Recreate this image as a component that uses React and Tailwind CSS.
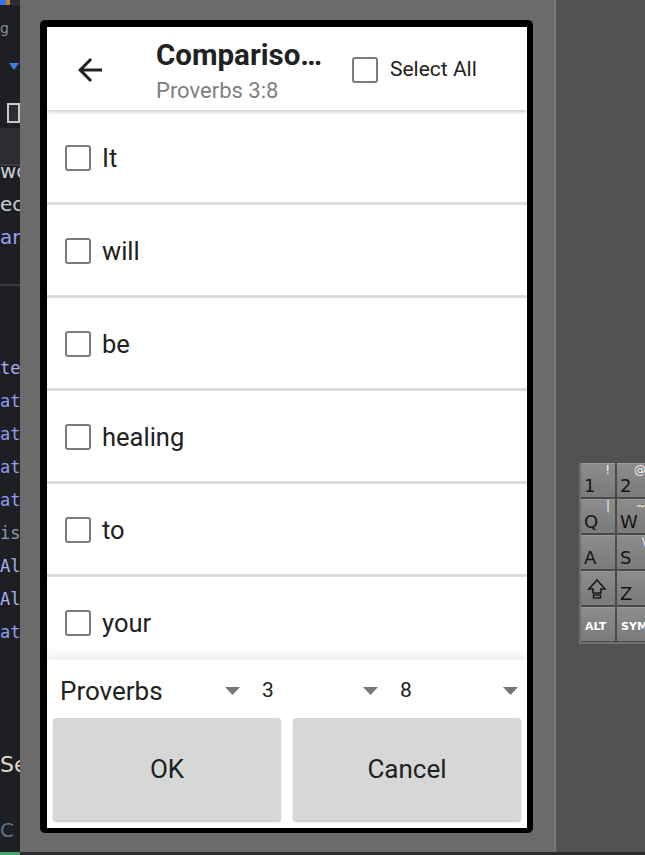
import React from 'react';

const words = ['It', 'will', 'be', 'healing', 'to', 'your', 'navel'];

const codeLines = [
  { t: 'te', c: 'text-[#b4a8f0]' },
  { t: 'at', c: 'text-[#8f9cf0]' },
  { t: 'at', c: 'text-[#8f9cf0]' },
  { t: 'at', c: 'text-[#8f9cf0]' },
  { t: 'at', c: 'text-[#8f9cf0]' },
  { t: 'is', c: 'text-[#8b9bb0]' },
  { t: 'Al', c: 'text-[#a9b0f5]' },
  { t: 'Al', c: 'text-[#a9b0f5]' },
  { t: 'at', c: 'text-[#8f9cf0]' },
];

const keys = [
  ['1', '!', '2', '@'],
  ['Q', '|', 'W', '~'],
  ['A', '', 'S', '\\'],
  ['shift', '', 'Z', ''],
  ['ALT', '', 'SYM', ''],
];

function Box({ className = '' }) {
  return <div className={`w-[26px] h-[26px] shrink-0 rounded-[3px] border-[2.5px] border-[#7b7b7b] ${className}`} />;
}

function Caret() {
  return (
    <svg width="15" height="8" viewBox="0 0 15 8" className="shrink-0">
      <path d="M0 0h15L7.5 8z" fill="#777777" />
    </svg>
  );
}

function Key({ label, sup }) {
  const dark = label === 'ALT' || label === 'SYM';
  return (
    <div className="relative h-[34px] w-[34px] shrink-0 bg-gradient-to-b from-[#8c8c8c] to-[#7a7a7a] border-t border-[#9a9a9a] overflow-hidden">
      {label === 'shift' ? (
        <svg width="20" height="22" viewBox="0 0 20 22" className="absolute left-[6px] top-[6px]">
          <path d="M10 2 L18 11 H14 V15 H6 V11 H2 Z" fill="none" stroke="#1a1a1a" strokeWidth="1.6" />
          <rect x="6.5" y="17" width="7" height="3" fill="none" stroke="#1a1a1a" strokeWidth="1.4" />
        </svg>
      ) : dark ? (
        <span className="absolute left-[4px] top-[11px] text-[11px] font-bold text-white" style={{ fontFamily: '"DejaVu Sans", sans-serif' }}>{label}</span>
      ) : (
        <span className="absolute left-[3px] bottom-[2px] text-[18px] leading-none text-[#151515]" style={{ fontFamily: '"DejaVu Sans", sans-serif' }}>{label}</span>
      )}
      {sup && (
        <span className="absolute right-[5px] top-[0px] text-[12px] leading-none text-[#f2f2f2]" style={{ fontFamily: '"DejaVu Sans", sans-serif' }}>{sup}</span>
      )}
    </div>
  );
}

export default function App() {
  return (
    <div className="w-[645px] h-[855px] overflow-hidden flex flex-col bg-[#1e1f22]">
      <div className="flex h-[852px]">
        {/* IDE strip */}
        <div className="w-[20px] shrink-0 flex flex-col overflow-hidden bg-[#1e1f22]" style={{ fontFamily: '"DejaVu Sans Mono", monospace' }}>
          <div className="h-[5px] shrink-0 flex">
            <div className="w-[6px] bg-[#3574f0]" />
            <div className="w-[4px] bg-[#c77d3a]" />
            <div className="flex-1 bg-[#2b2d30]" />
          </div>
          <div className="h-[46px] shrink-0 pt-[16px] text-[14px] leading-none text-[#8a8d94]" style={{ fontFamily: '"DejaVu Sans", sans-serif' }}>g</div>
          <div className="h-[48px] shrink-0 flex items-start justify-end pr-[1px] pt-[12px]">
            <svg width="10" height="7" viewBox="0 0 10 7"><path d="M0 0h10L5 7z" fill="#3d7dd6" /></svg>
          </div>
          <div className="h-[29px] shrink-0 flex justify-end pt-[4px]">
            <div className="w-[13px] h-[20px] border-2 border-[#c8c8c8] bg-[#2b2d30]" />
          </div>
          <div className="h-[36px] shrink-0 bg-[#2b2d30]" />
          <div className="h-[2px] shrink-0 bg-[#393b40]" />
          <div className="flex flex-col shrink-0" style={{ fontFamily: '"DejaVu Sans", sans-serif' }}>
            <div className="h-[22px] overflow-hidden">
              <div className="-mt-[11px] h-[33px] text-[20px] leading-[33px] text-[#c9ccd2]">wo</div>
            </div>
            <div className="h-[33px] text-[20px] leading-[33px] text-[#c9ccd2]">ec</div>
            <div className="h-[33px] text-[20px] leading-[33px] text-[#9aa2f2]">ar</div>
          </div>
          <div className="h-[30px] shrink-0" />
          <div className="h-[2px] shrink-0 bg-[#393b40]" />
          <div className="h-[66px] shrink-0" />
          <div className="flex flex-col shrink-0">
            {codeLines.map((l, i) => (
              <div key={i} className={`h-[33px] text-[17px] leading-[33px] ${l.c}`}>{l.t}</div>
            ))}
          </div>
          <div className="h-[101px] shrink-0" />
          <div className="h-[30px] shrink-0 text-[22px] leading-[30px] text-[#e6d9c6]" style={{ fontFamily: '"DejaVu Sans", sans-serif' }}>Se</div>
          <div className="h-[40px] shrink-0" />
          <div className="h-[20px] shrink-0 text-[20px] leading-[20px] text-[#5d7387]" style={{ fontFamily: '"DejaVu Sans", sans-serif' }}>C</div>
        </div>

        {/* Emulator frame */}
        <div className="w-[534px] shrink-0 bg-[#6b6b6b] pt-[20px] pl-[20px]">
          <div className="w-[493px] h-[813px] bg-black rounded-[5px] pl-[7px] pt-[7px] pr-[6px] pb-[5px]">
            <div className="w-[480px] h-[801px] bg-white flex flex-col overflow-hidden" style={{ fontFamily: 'Roboto, "Noto Sans", sans-serif' }}>
              {/* Header */}
              <div className="relative z-10 h-[83px] shrink-0 flex items-center bg-white shadow-[0_2px_4px_rgba(0,0,0,0.2)]">
                <div className="w-[109px] shrink-0 flex justify-center pl-[2px] pt-[2px]">
                  <svg width="36" height="36" viewBox="0 0 24 24" className="mr-[26px]">
                    <path d="M20 11H7.83l5.59-5.59L12 4l-8 8 8 8 1.41-1.41L7.83 13H20v-2z" fill="#222222" />
                  </svg>
                </div>
                <div className="w-[196px] shrink-0 self-start pt-[11px] flex flex-col">
                  <div className="h-[34px] text-[29.5px] leading-[34px] font-bold text-[#212121] whitespace-nowrap">Compariso…</div>
                  <div className="h-[28px] mt-[5px] text-[22px] leading-[28px] text-[#808080]">Proverbs 3:8</div>
                </div>
                <div className="flex items-center pt-[2px]">
                  <Box />
                  <span className="ml-[12px] text-[21px] text-[#212121]">Select All</span>
                </div>
              </div>

              {/* List */}
              <div className="flex-1 overflow-hidden flex flex-col pt-[2px]">
                {words.map((w) => (
                  <div key={w} className="h-[93px] shrink-0 flex items-center pl-[18px] pt-[2px] border-b-[3px] border-[#dcdcdc]">
                    <Box />
                    <span className="ml-[11px] text-[25.5px] text-[#212121]">{w}</span>
                  </div>
                ))}
              </div>

              {/* Footer */}
              <div className="relative z-10 h-[168px] shrink-0 bg-white shadow-[0_-5px_8px_rgba(0,0,0,0.07)] px-[6px] flex flex-col">
                <div className="h-[58px] flex items-center pt-[4px]">
                  <div className="w-[194px] flex items-center justify-between pl-[7px] pr-[7px]">
                    <span className="text-[26px] text-[#212121]">Proverbs</span>
                    <Caret />
                  </div>
                  <div className="w-[139px] flex items-center justify-between pl-[15px] pr-[8px]">
                    <span className="text-[21px] text-[#212121]">3</span>
                    <Caret />
                  </div>
                  <div className="flex-1 flex items-center justify-between pl-[14px] pr-[3px]">
                    <span className="text-[21px] text-[#212121]">8</span>
                    <Caret />
                  </div>
                </div>
                <div className="flex gap-[12px]">
                  <button className="w-[228px] h-[102px] rounded-[3px] bg-[#d6d7d7] shadow-[0_2px_2px_rgba(0,0,0,0.22)] text-[26px] text-[#212121]">OK</button>
                  <button className="w-[228px] h-[102px] rounded-[3px] bg-[#d6d7d7] shadow-[0_2px_2px_rgba(0,0,0,0.22)] text-[26px] text-[#212121]">Cancel</button>
                </div>
              </div>
            </div>
          </div>
        </div>

        <div className="w-[2px] shrink-0 bg-[#767676]" />

        {/* Right panel with keyboard */}
        <div className="flex-1 bg-[#525252] pt-[463px] pl-[23px]">
          <div className="flex flex-col gap-[2px] border-l-2 border-b-2 border-[#6e6e6e] bg-[#4a4a4a] w-[80px] pb-[1px]">
            {keys.map((r, i) => (
              <div key={i} className="flex gap-[2px]">
                <Key label={r[0]} sup={r[1]} />
                <Key label={r[2]} sup={r[3]} />
              </div>
            ))}
          </div>
        </div>
      </div>
      <div className="h-[3px] flex bg-[#2b2d30]">
        <div className="w-[20px] bg-[#46a36b]" />
      </div>
    </div>
  );
}
